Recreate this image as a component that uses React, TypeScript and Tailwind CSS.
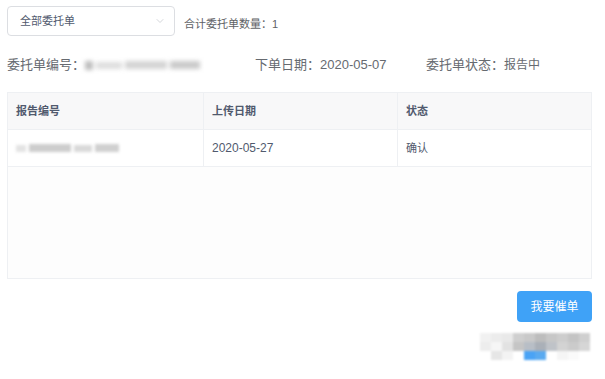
import { ChevronDown } from "lucide-react";

const blurCells: string[][] = [
  ["#f1f1f1", "#ececec", "#e9e9e9", "#cfcfcf", "#c9c9c9", "#bdbdbd", "#c7c7c7", "#cdcdcd", "#c4c4c4", "#cfcfcf"],
  ["#ededed", "#f6f6f6", "#e2e2e2", "#c5c5c5", "#b8bec6", "#aab0b8", "#bfc3c8", "#d3d3d3", "#cbcbcb", "#d6d6d6"],
  ["#ffffff", "#e6e6e6", "#f3f3f3", "#ffffff", "#4aa3f5", "#5aaaf0", "#ffffff", "#f5f5f5", "#fafafa", "#ffffff"],
];

export default function App() {
  return (
    <div
      className="w-[605px] h-[379px] bg-white text-[#606266] overflow-hidden"
      style={{ fontFamily: '"Liberation Sans", "Noto Sans CJK SC", sans-serif' }}
    >
      <div className="pl-[7px] pr-[13px] pt-[6px]">
        {/* filter row */}
        <div className="flex items-center">
          <div className="w-[168px] h-[30px] border border-[#dcdee2] rounded-[4px] flex items-center justify-between pl-[12px] pr-[8px] text-[11px] text-[#515a6e]">
            <span>全部委托单</span>
            <ChevronDown className="w-[12px] h-[12px] text-[#c5c8ce]" strokeWidth={1.5} />
          </div>
          <div className="ml-[9px] mt-[6px] text-[11px] text-[#606266]">合计委托单数量：1</div>
        </div>

        {/* info row */}
        <div className="flex items-center mt-[20px] h-[18px] text-[13px] text-[#666a70]">
          <div className="w-[248px] flex items-center">
            <span>委托单编号：</span>
            <span className="flex items-center gap-[3px] blur-[2px]">
              <span className="w-[8px] h-[9px] bg-[#bdbdbd]" />
              <span className="w-[26px] h-[7px] bg-[#dedede]" />
              <span className="w-[42px] h-[8px] bg-[#d4d4d4]" />
              <span className="w-[30px] h-[8px] bg-[#cacaca]" />
            </span>
          </div>
          <div className="w-[171px]">下单日期：2020-05-07</div>
          <div className="flex items-center">
            <span>委托单状态：</span>
            <span className="text-[12px]">报告中</span>
          </div>
        </div>

        {/* table */}
        <div className="mt-[18px] h-[187px] border border-[#eef0f3] bg-[#fdfdfd]">
          <div className="grid grid-cols-[196px_194px_1fr] h-[37px] bg-[#f8f8f9] border-b border-[#eef0f3] text-[11px] font-semibold text-[#515a6e]">
            <div className="flex items-center pl-[8px] border-r border-[#eef0f3]">报告编号</div>
            <div className="flex items-center pl-[8px] border-r border-[#eef0f3]">上传日期</div>
            <div className="flex items-center pl-[8px]">状态</div>
          </div>
          <div className="grid grid-cols-[196px_194px_1fr] h-[37px] bg-white border-b border-[#eef0f3] text-[#515a6e]">
            <div className="flex items-center pl-[8px] border-r border-[#eef0f3]">
              <span className="flex items-center gap-[3px] blur-[1.5px]">
                <span className="w-[10px] h-[7px] bg-[#e3e3e3]" />
                <span className="w-[42px] h-[8px] bg-[#cdcdcd]" />
                <span className="w-[18px] h-[7px] bg-[#d9d9d9]" />
                <span className="w-[24px] h-[8px] bg-[#d0d0d0]" />
              </span>
            </div>
            <div className="flex items-center pl-[8px] border-r border-[#eef0f3] text-[12px]">2020-05-27</div>
            <div className="flex items-center pl-[8px] text-[11px]">确认</div>
          </div>
        </div>

        {/* actions */}
        <div className="flex justify-end mt-[12px]">
          <button className="w-[75px] h-[31px] rounded-[4px] bg-[#3fa2f7] text-white text-[12px]">我要催单</button>
        </div>

        <div className="flex justify-end mt-[11px] pr-[2px]">
          <div className="flex flex-col blur-[1px]">
            {blurCells.map((row, i) => (
              <div key={i} className="flex">
                {row.map((c, j) => (
                  <span key={j} className="w-[11px] h-[9px]" style={{ backgroundColor: c }} />
                ))}
              </div>
            ))}
          </div>
        </div>
      </div>
    </div>
  );
}
